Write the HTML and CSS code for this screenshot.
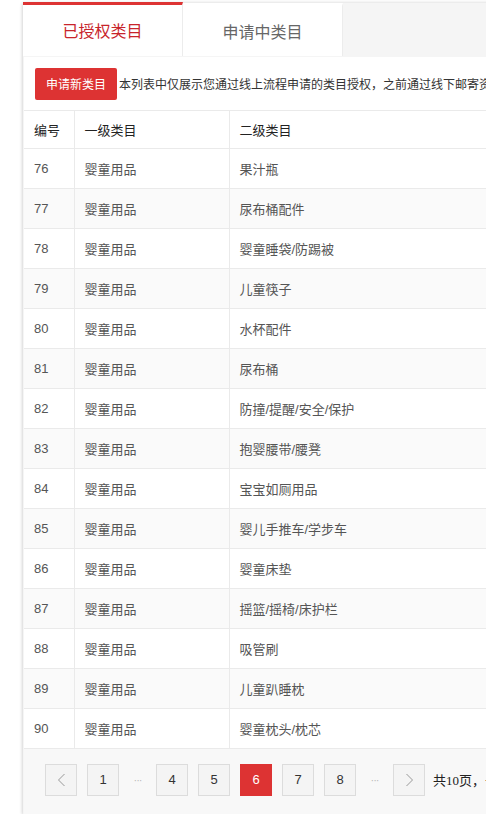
FILE: index.html
```html
<!DOCTYPE html>
<html lang="zh-CN">
<head>
<meta charset="utf-8">
<title>已授权类目</title>
<link rel="stylesheet" href="styles.css">
</head>
<body>
<div class="panel">
  <div class="tabs">
    <div class="tab active">已授权类目</div>
    <div class="tab">申请中类目</div>
  </div>
  <div class="content">
    <div class="notice">
      <button class="btn-apply">申请新类目</button>
      <span class="notice-text">本列表中仅展示您通过线上流程申请的类目授权，之前通过线下邮寄资质申请的类目授权请联系客服查询。</span>
    </div>
    <table class="grid">
      <colgroup><col class="c1"><col class="c2"><col class="c3"></colgroup>
      <thead>
        <tr><th>编号</th><th>一级类目</th><th>二级类目</th></tr>
      </thead>
      <tbody>
        <tr><td>76</td><td>婴童用品</td><td>果汁瓶</td></tr>
        <tr><td>77</td><td>婴童用品</td><td>尿布桶配件</td></tr>
        <tr><td>78</td><td>婴童用品</td><td>婴童睡袋/防踢被</td></tr>
        <tr><td>79</td><td>婴童用品</td><td>儿童筷子</td></tr>
        <tr><td>80</td><td>婴童用品</td><td>水杯配件</td></tr>
        <tr><td>81</td><td>婴童用品</td><td>尿布桶</td></tr>
        <tr><td>82</td><td>婴童用品</td><td>防撞/提醒/安全/保护</td></tr>
        <tr><td>83</td><td>婴童用品</td><td>抱婴腰带/腰凳</td></tr>
        <tr><td>84</td><td>婴童用品</td><td>宝宝如厕用品</td></tr>
        <tr><td>85</td><td>婴童用品</td><td>婴儿手推车/学步车</td></tr>
        <tr><td>86</td><td>婴童用品</td><td>婴童床垫</td></tr>
        <tr><td>87</td><td>婴童用品</td><td>摇篮/摇椅/床护栏</td></tr>
        <tr><td>88</td><td>婴童用品</td><td>吸管刷</td></tr>
        <tr><td>89</td><td>婴童用品</td><td>儿童趴睡枕</td></tr>
        <tr><td>90</td><td>婴童用品</td><td>婴童枕头/枕芯</td></tr>
      </tbody>
    </table>
    <div class="pager">
      <a class="pg arrow" href="#"><svg width="9" height="14" viewBox="0 0 9 14"><path d="M7.5 1 L1.5 7 L7.5 13" fill="none" stroke="#999" stroke-width="1"/></svg></a>
      <a class="pg" href="#">1</a>
      <span class="dots">···</span>
      <a class="pg" href="#">4</a>
      <a class="pg" href="#">5</a>
      <a class="pg current" href="#">6</a>
      <a class="pg" href="#">7</a>
      <a class="pg" href="#">8</a>
      <span class="dots">···</span>
      <a class="pg arrow" href="#"><svg width="9" height="14" viewBox="0 0 9 14"><path d="M1.5 1 L7.5 7 L1.5 13" fill="none" stroke="#999" stroke-width="1"/></svg></a>
      <span class="total">共10页，去第 <input class="jump" value="6"> 页</span>
    </div>
  </div>
</div>
</body>
</html>
```
FILE: styles.css
```css
html, body {
  margin: 0;
  padding: 0;
  background: #fff;
  overflow: hidden;
}
body {
  font-family: "Liberation Sans", "Noto Sans CJK SC", sans-serif;
  color: #333;
}
.panel {
  margin: 2px 0 0 23px;
  width: 1000px;
  background: #f5f5f5;
  box-shadow: 0 2px 4px rgba(0, 0, 0, 0.18), -1px 0 3px rgba(0, 0, 0, 0.06);
}
.tabs {
  display: flex;
  height: 53px;
  background: #f5f5f5;
  border-top: 1px solid #ececec;
}
.tab {
  width: 160px;
  box-sizing: border-box;
  background: #fff;
  border-right: 1px solid #ececec;
  border-top: 3px solid transparent;
  font-family: "Noto Sans CJK SC", sans-serif;
  font-size: 16px;
  color: #666;
  display: flex;
  align-items: center;
  justify-content: center;
  padding-bottom: 1px;
}
.tab.active {
  border-top-color: #dd3333;
  color: #c8242b;
  margin-top: -1px;
  height: 54px;
  padding-bottom: 2px;
}
.content {
  margin-top: 1px;
  background: #fff;
  margin-left: 1px;
}
.notice {
  display: flex;
  align-items: center;
  height: 53px;
  padding-left: 11px;
  white-space: nowrap;
}
.btn-apply {
  height: 32px;
  width: 82px;
  border: 0;
  border-radius: 2px;
  background: #dd3333;
  color: #fff;
  font-family: "Noto Sans CJK SC", sans-serif;
  font-size: 12px;
  padding: 0;
  margin-right: 2px;
}
.notice-text {
  font-family: "Noto Sans CJK SC", sans-serif;
  font-size: 12px;
  color: #333;
}
.grid {
  border-collapse: collapse;
  width: 100%;
  table-layout: fixed;
  font-size: 13px;
}
.c1 { width: 50px; }
.c2 { width: 155px; }
.grid th, .grid td {
  border-top: 1px solid #eaeaea;
  border-left: 1px solid #eaeaea;
  text-align: left;
  padding: 0 10px;
  white-space: nowrap;
}
.grid th:first-child, .grid td:first-child {
  border-left: 0;
}
.grid th {
  height: 37px;
  font-weight: normal;
  color: #222;
  font-family: "Noto Sans CJK SC", sans-serif;
}
.grid td {
  height: 39px;
  color: #555;
}
.grid tbody tr:nth-child(even) td {
  background: #fafafa;
}
.pager {
  display: flex;
  align-items: center;
  height: 66px;
  box-sizing: border-box;
  border-top: 1px solid #eaeaea;
  background: #f8f8f8;
  padding: 0 0 4px 21px;
  white-space: nowrap;
}
.pg {
  width: 32px;
  height: 32px;
  box-sizing: border-box;
  border: 1px solid #dcdcdc;
  background: #f4f4f4;
  color: #333;
  text-decoration: none;
  font-size: 13px;
  display: flex;
  align-items: center;
  justify-content: center;
  margin-right: 10px;
}
.pg.current {
  background: #dd3333;
  border-color: #dd3333;
  color: #fff;
}
.dots {
  color: #bbb;
  font-size: 11px;
  width: 17px;
  text-align: center;
  margin-right: 10px;
  letter-spacing: -1px;
}
.total {
  margin-left: -2px;
  font-family: "Liberation Serif", "Noto Sans CJK SC", serif;
  font-size: 13px;
  color: #222;
}
.jump {
  width: 30px;
  height: 24px;
  border: 1px solid #ddd;
}
```
